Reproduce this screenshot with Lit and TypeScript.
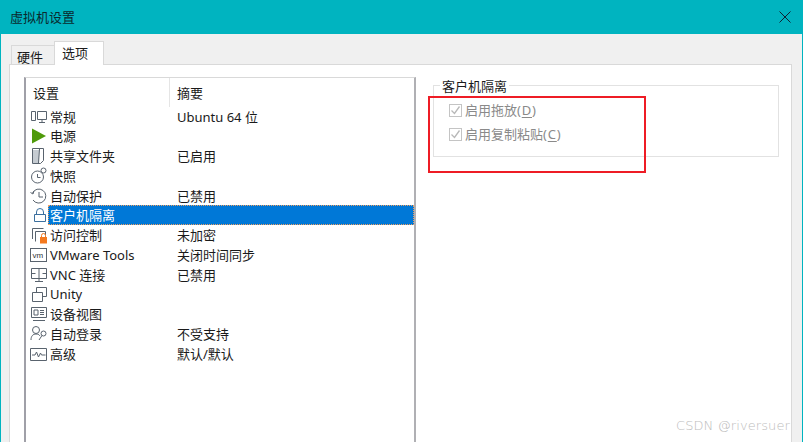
import { LitElement, html, css, svg } from "lit";
import { customElement } from "lit/decorators.js";

const S = (c: unknown) => html`<svg class="ico" width="20" height="20" viewBox="0 0 20 20" fill="none" stroke="#59636e" stroke-width="1">${c}</svg>`;
const icons: Record<string, unknown> = {
  general: S(svg`<path d="M2.500 4.500h4v9h-4zM8.500 4.500h9v8h-9zM10 15.500h6M13 12.500v3"/>`),
  power: html`<svg class="ico" width="20" height="20" viewBox="0 0 20 20"><path d="M3 2.500L17 10 3 17.500z" fill="#4f9a0a"/></svg>`,
  share: S(svg`<path d="M3 4h7v13H3z" fill="#c5cbd1" stroke="none"/><path d="M3.500 2.500h11v12l-3 3h-8zM10.500 3l-1 14"/>`),
  snap: S(svg`<circle cx="8.500" cy="11" r="6"/><path d="M8.500 8v3.500h3"/><circle cx="14.500" cy="4.500" r="2.500" fill="#fff"/>`),
  auto: S(svg`<path d="M3.500 7A7 7 0 1 1 4 14"/><path d="M10 6v5h4M1.500 6.500l2.500 1.500 1-3"/>`),
  lock: html`<svg class="ico" width="20" height="20" viewBox="0 0 20 20" fill="none" stroke="#3b6f9e"><path d="M5.500 9.500h11v7h-11zM7.500 9.500V7a3.500 3.500 0 0 1 7 0v2.500"/></svg>`,
  access: S(svg`<path d="M3.500 14V3.500h11M6.500 16.500V6.500h10v4"/><path d="M11 12h7v6.500h-7z" fill="#f4791f" stroke="none"/><path d="M12.500 12v-1.500a2 2 0 0 1 4 0V12" stroke="#f4791f"/>`),
  vm: html`<svg class="ico" width="20" height="20" viewBox="0 0 20 20" fill="none" stroke="#59636e"><rect x="1.500" y="3.500" width="16" height="13"/><text x="3.500" y="13" font-size="8" font-family="Liberation Sans" fill="#333" stroke="none">vm</text></svg>`,
  vnc: S(svg`<path d="M2.500 3.500h15v10h-15zM2.500 8.500h4M13.500 8.500h4M10 3.500v10M6 16.500h8M10 13.500v3"/>`),
  unity: S(svg`<path d="M3.500 8.500h10v9h-10zM7.500 8.500V3.500h10v9h-4"/>`),
  view: S(svg`<path d="M2.500 3.500h15v10h-15zM5 6h4v5H5zM11 6.500h4M11 8.500h4M11 10.500h4M4 16.500h12"/>`),
  login: S(svg`<circle cx="7" cy="6" r="3.500"/><path d="M2 16c0-4 2-6 5-6s3 1 4 2"/><circle cx="14.500" cy="9.500" r="2.500"/><path d="M13 11.500l-3 4.500"/>`),
  adv: S(svg`<path d="M1.500 4.500h16v12h-16zM3 11h3l1.500-3 2 5 2-4 1 2h4"/>`),
};

const rows: [string, string, string][] = [
  ["general", "常规", "Ubuntu 64 位"],
  ["power", "电源", ""],
  ["share", "共享文件夹", "已启用"],
  ["snap", "快照", ""],
  ["auto", "自动保护", "已禁用"],
  ["lock", "客户机隔离", ""],
  ["access", "访问控制", "未加密"],
  ["vm", "VMware Tools", "关闭时间同步"],
  ["vnc", "VNC 连接", "已禁用"],
  ["unity", "Unity", ""],
  ["view", "设备视图", ""],
  ["login", "自动登录", "不受支持"],
  ["adv", "高级", "默认/默认"],
];

@customElement("app-root")
export class AppRoot extends LitElement {
  static styles = css`
    :host {
      display: block;
      width: 803px;
      height: 442px;
      overflow: hidden;
      position: relative;
      font: 13px/20px "Segoe UI", "Noto Sans", "Noto Sans CJK SC", sans-serif;
      color: #1a1a1a;
      background: #f0f0f0;
    }
    .win {
      box-sizing: border-box;
      height: 442px;
      border-left: 1px solid #00b4c0;
      border-right: 1px solid #00b4c0;
      display: flex;
      flex-direction: column;
    }
    .title {
      height: 34px;
      flex: none;
      background: #00b4c0;
      display: flex;
      align-items: center;
      justify-content: space-between;
      padding: 0 11px 0 9px;
      color: #0a2a2e;
    }
    .body {
      flex: 1;
      display: flex;
      flex-direction: column;
      padding: 8px 10px 0 8px;
      min-height: 0;
    }
    .tabs {
      display: flex;
      align-items: flex-end;
      height: 23px;
      flex: none;
      padding-left: 2px;
      margin-bottom: -1px;
      position: relative;
      z-index: 1;
    }
    .tab {
      height: 20px;
      width: 44px;
      box-sizing: border-box;
      border: 1px solid #d9d9d9;
      border-bottom: none;
      line-height: 21px;
      padding: 1px 0 0 5px;
    }
    .tab.on {
      height: 24px;
      width: 50px;
      background: #fff;
      margin-left: -1px;
      line-height: 22px;
      padding: 0 0 0 7px;
    }
    .panel {
      flex: 1;
      background: #fff;
      border: 1px solid #d9d9d9;
      border-bottom: none;
      display: flex;
      padding: 12px 0 0 14px;
      min-height: 0;
    }
    .list {
      width: 392px;
      flex: none;
      border: 1px solid #a0a0a8;
      border-bottom: none;
      border-left-width: 2px;
      border-right-width: 2px;
      border-top-color: #d9d9d9;
      border-right-color: #b0b0b4;
      box-sizing: border-box;
    }
    .head {
      display: grid;
      grid-template-columns: 143px 1fr;
      height: 28.7px;
      align-items: start;
    }
    .head span { padding-left: 7px; height: 28.7px; line-height: 30px; }
    .head span + span {
      border-left: 1px solid #e5e5e5;
      padding-left: 7px;
    }
    .row {
      display: grid;
      grid-template-columns: 143px 1fr;
      height: 19.75px;
      align-items: center;
      white-space: nowrap;
      position: relative;
    }
    .name { display: flex; align-items: center; padding-left: 3px; }
    .ico { flex: none; }
    .name b { font-weight: 400; padding-left: 1px; }
    .sum { padding-left: 8px; }
    .row.sel { background: linear-gradient(to right, #fff 22px, #0078d7 22px); }
    .row.sel b { color: #fff; }
    .row.sel::after {
      content: "";
      position: absolute;
      inset: 0 0 0 22px;
      border: 1px dotted #f0a060;
    }
    .right { flex: 1; padding: 8px 0 0 17px; }
    .group {
      width: 346px;
      height: 72px;
      box-sizing: border-box;
      border: 1px solid #e2e2e2;
      padding: 12px 0 0 15px;
      position: relative;
    }
    .legend {
      position: absolute;
      left: 6px;
      top: -9px;
      background: #fff;
      padding: 0 2px;
      line-height: 18px;
    }
    .check {
      display: flex;
      align-items: center;
      gap: 3px;
      height: 24px;
      color: #8a8a8a;
    }
    .key { letter-spacing: 0.8px; }
    .box {
      width: 11px;
      height: 11px;
      border: 1px solid #c4c4c4;
      flex: none;
    }
    .box svg { display: block; }
    u { text-underline-offset: 2px; }
    .mark {
      position: absolute;
      left: 428px;
      top: 96px;
      width: 218px;
      height: 77px;
      box-sizing: border-box;
      border: 2px solid #ee1c25;
      pointer-events: none;
    }
    .wm {
      position: absolute;
      right: 13px;
      top: 416px;
      color: #bcbcbc;
      font: 13px/20px "DejaVu Sans", sans-serif;
      font-weight: 200;
      letter-spacing: 0.1px;
    }
  `;

  private check(label: string, key: string) {
    return html`<div class="check">
      <span class="box"><svg width="11" height="11" viewBox="0 0 11 11" fill="none" stroke="#b8b8b8" stroke-width="1.300"><path d="M1.500 5.500l3 3 5-7"/></svg></span>
      <span>${label}<span class="key">(<u>${key}</u>)</span></span>
    </div>`;
  }

  render() {
    return html`
      <div class="win">
        <div class="title">
          <span>虚拟机设置</span>
          <svg width="12" height="12" viewBox="0 0 12 12" stroke="#123" stroke-width="1"><path d="M.5.500l11 11M11.500.500l-11 11"/></svg>
        </div>
        <div class="body">
          <div class="tabs">
            <div class="tab">硬件</div>
            <div class="tab on">选项</div>
          </div>
          <div class="panel">
            <div class="list">
              <div class="head"><span>设置</span><span>摘要</span></div>
              ${rows.map(([ic, n, s], i) => html`
                <div class="row ${i === 5 ? "sel" : ""}">
                  <div class="name">${icons[ic]}<b class="lab">${n}</b></div>
                  <div class="sum">${s}</div>
                </div>`)}
            </div>
            <div class="right">
              <div class="group">
                <div class="legend">客户机隔离</div>
                ${this.check("启用拖放", "D")}
                ${this.check("启用复制粘贴", "C")}
              </div>
            </div>
          </div>
        </div>
      </div>
      <div class="mark"></div>
      <div class="wm">CSDN @riversuer</div>
    `;
  }
}
